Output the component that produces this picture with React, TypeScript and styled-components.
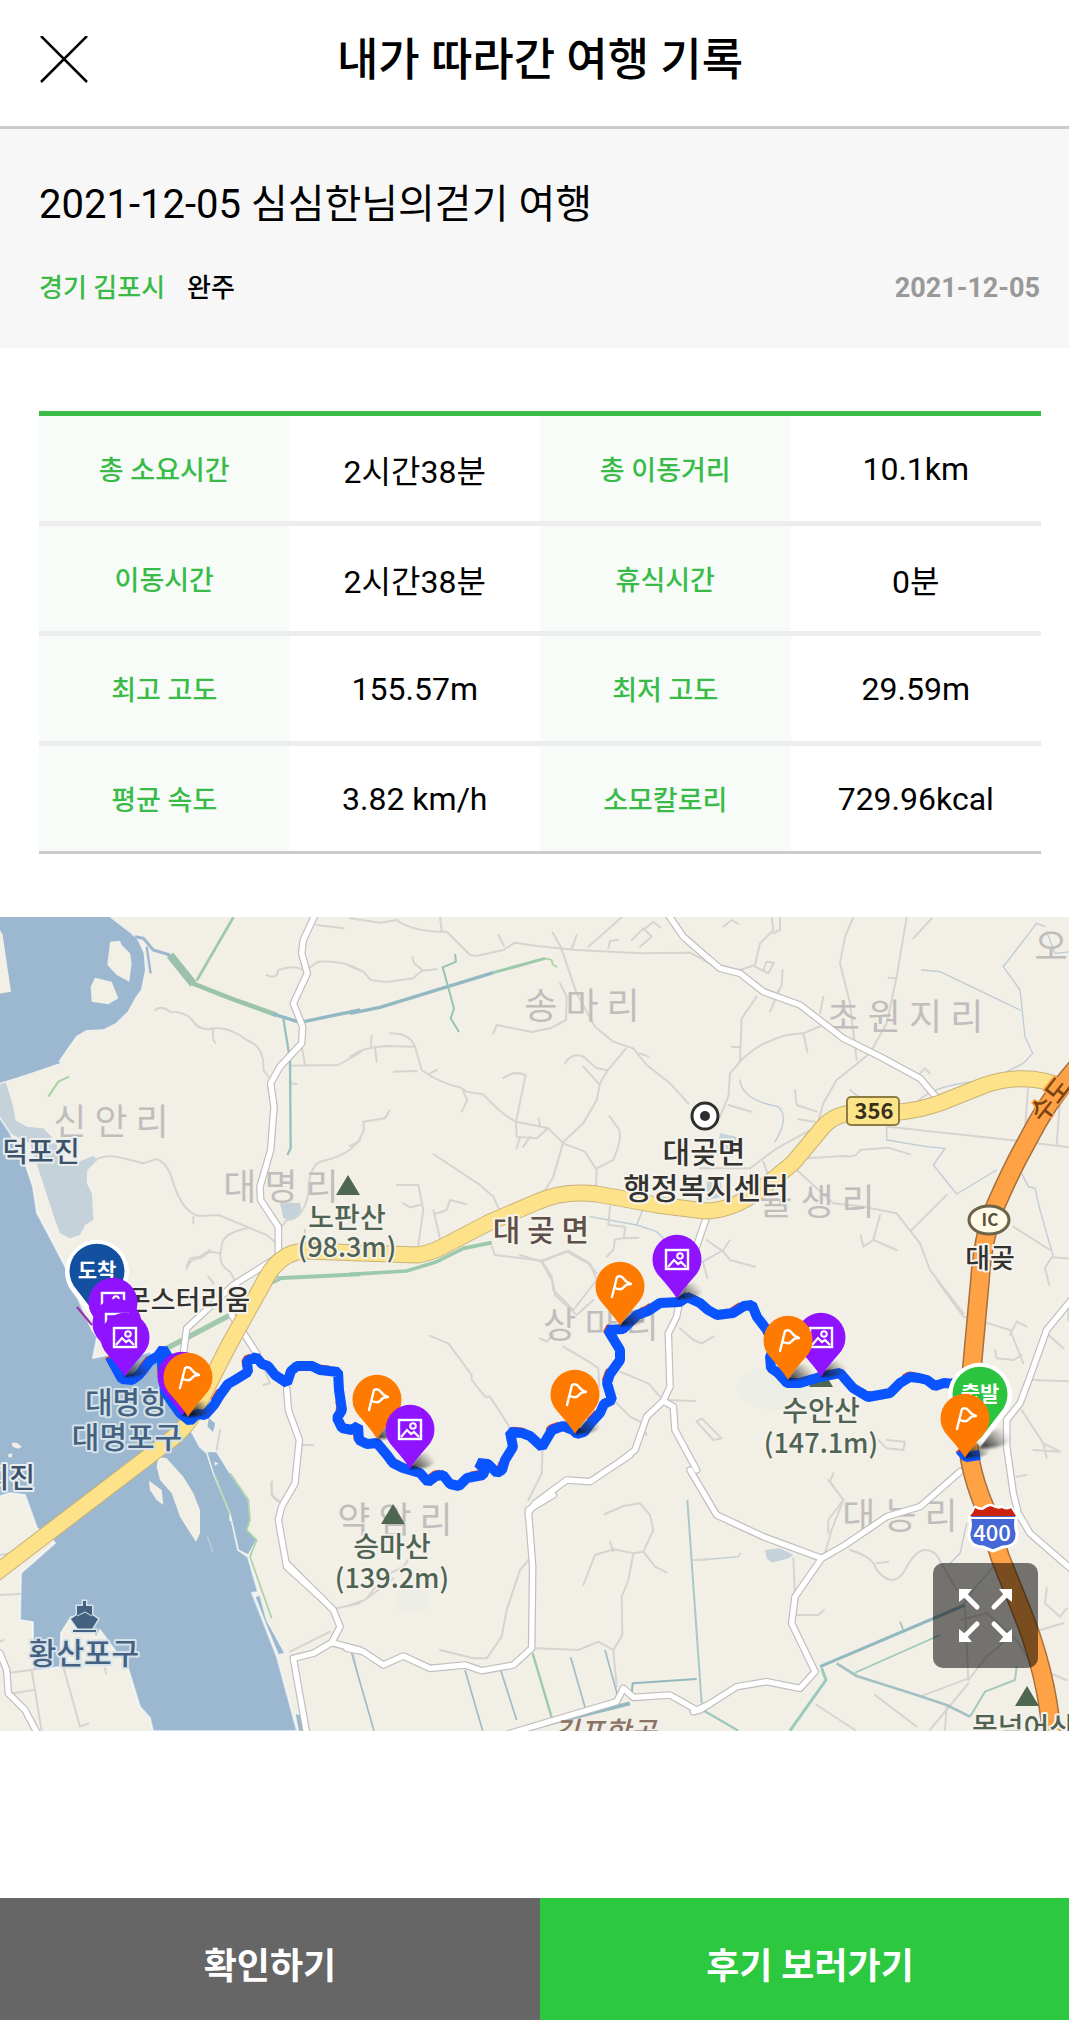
import React from "react";
import styled, { createGlobalStyle } from "styled-components";

const GlobalStyle = createGlobalStyle`
  *, *::before, *::after { box-sizing: border-box; }
  body {
    margin: 0;
    background: #fff;
    color: #000;
    font-family: Roboto, "Noto Sans CJK KR", sans-serif;
  }
  button { font: inherit; }
`;

/* ---------- layout ---------- */

const Screen = styled.div`
  overflow-x: clip;
`;

/* The page runs a little under the right edge of the window, as in the app's web view. */
const Page = styled.div`
  display: flex;
  flex-direction: column;
  width: calc(100% + 11px);
  min-height: 100vh;
`;

const Header = styled.header`
  display: grid;
  grid-template-columns: 48px 1fr 48px;
  align-items: center;
  padding: 30px 40px 36px;
  border-bottom: 3px solid #cbcbcb;
`;

const CloseButton = styled.button`
  display: block;
  width: 48px;
  height: 48px;
  padding: 0;
  border: 0;
  background: none;
  cursor: pointer;
  svg { display: block; }
`;

const Title = styled.h1`
  margin: 0;
  padding-top: 2px;
  font-size: 45px;
  font-weight: 500;
  line-height: 58px;
  text-align: center;
`;

const Summary = styled.section`
  padding: 47px 40px 42px 39px;
  background: #f7f7f7;
`;

const TripName = styled.h2`
  margin: 0 0 36px;
  font-size: 40px;
  font-weight: 400;
  line-height: 58px;
`;

const Meta = styled.div`
  display: flex;
  align-items: center;
  gap: 22px;
  font-size: 26px;
  font-weight: 500;
  line-height: 36px;
`;

const Region = styled.span`
  color: #3abb48;
`;

const TripDate = styled.time`
  margin-left: auto;
  color: #999;
  font-size: 27px;
  font-weight: 700;
`;

const Stats = styled.section`
  padding: 63px 39px;
`;

const StatsTable = styled.table`
  width: 100%;
  table-layout: fixed;
  border-collapse: separate;
  border-spacing: 0;
  border-top: 5px solid #3cbd4a;
  border-bottom: 3px solid #cbcbcb;
`;

const StatRow = styled.tr`
  &:not(:last-child) > * { border-bottom: 5px solid #ededed; }
`;

const StatLabel = styled.th`
  height: 110px;
  padding: 0;
  background: #f7fcf8;
  color: #3abb48;
  font-size: 27px;
  font-weight: 500;
  tr:last-child > & { height: 105px; }
`;

const StatValue = styled.td`
  padding: 0;
  font-size: 32px;
  text-align: center;
`;

const MapPanel = styled.section`
  position: relative;
  overflow: hidden;
  background: #f2efe7;
`;

const MapSvg = styled.svg`
  display: block;
  width: 100%;
  height: auto;
  font-family: "Noto Sans CJK KR", sans-serif;
`;

const ExpandButton = styled.button`
  position: absolute;
  right: 42px;
  bottom: 63px;
  display: grid;
  place-items: center;
  width: 105px;
  height: 105px;
  padding: 0;
  border: 0;
  border-radius: 10px;
  background: rgba(0, 0, 0, 0.52);
  cursor: pointer;
`;

const Footer = styled.footer`
  display: grid;
  grid-template-columns: 1fr 1fr;
  margin-top: auto;
`;

const FooterButton = styled.button<{ $primary?: boolean }>`
  height: 122px;
  padding: 8px 0 0;
  border: 0;
  background: ${(p) => (p.$primary ? "#2cc840" : "#666")};
  color: #fff;
  font-size: 36px;
  font-weight: 700;
  cursor: pointer;
`;

/* ---------- map data ---------- */

/* Survey sheets: each sheet has its own origin and three units to the map unit. */
const sheets = {
  A: [0, 910], B: [350, 910], C: [700, 910], D: [0, 1220], E: [270, 1300],
  F: [520, 1200], G: [740, 1280], H: [0, 1440], I: [350, 1500], J: [700, 1480],
} as const;
type Sheet = keyof typeof sheets;
type Lines = [Sheet, string][];

const at = (s: Sheet) => `translate(${sheets[s][0]} ${sheets[s][1]}) scale(${1 / 3})`;

const sea =
  "M-9,1108 L0,1118 L10,1133 L25,1163 L33,1187 L37,1213 L53,1243 L67,1270 L80,1303 L92,1330 L97,1337 L93,1358 L108,1355 L112,1362 L150,1352 L165,1365 L165,1390 L187,1423 L200,1447 L207,1453 L214,1474 L230,1513 L238,1550 L248,1557 L258,1592 L252,1593 L277,1657 L297,1731 L153,1731 L150,1718 L140,1707 L128,1668 L100,1630 L96,1638 L90,1625 L71,1617 L61,1633 L60,1667 L33,1670 L33,1622 L20,1620 L21,1573 L55,1543 L52,1539 L37,1528 L25,1495 L10,1493 L-9,1499 Z";

const water: Lines = [
  ["A", "M-20,12 L320,12 L395,70 L415,90 L433,130 L437,180 L425,240 L410,260 L385,305 L350,340 L310,360 L260,362 L230,380 L205,415 L178,455 L190,458 L120,482 L50,505 L-20,526 Z"],
  ["H", "M620,35 L650,35 L690,100 L745,180 L750,240 L740,270 L770,300 L745,345 L715,330 L690,220 L640,100 Z"],
  ["H", "M765,470 L780,465 L800,540 L855,640 L835,645 L800,560 Z"],
  ["H", "M885,820 L910,825 L915,874 L895,874 Z"],
  ["D", "M625,590 L648,610 L640,640 L620,620 Z"],
];

const shallows: Lines = [
  ["A", "M-20,522 L18,518 L40,590 L46,630 L80,650 L130,655 L155,680 L150,700 L90,700 L30,670 L-20,590 Z"],
  ["A", "M90,700 L170,700 L180,765 L205,768 L280,738 L292,750 L262,780 L260,820 L276,850 L280,930 L255,945 L240,975 L210,985 L180,970 L165,930 Z"],
  ["A", "M840,880 L900,878 L905,905 L880,930 L850,925 Z"],
  ["J", "M195,210 L240,205 L280,225 L265,235 L215,248 L200,235 Z"],
  ["C", "M60,670 L110,680 L100,740 L50,735 Z M20,810 L60,800 L70,860 L20,870 Z"],
];

const islands: Lines = [
  ["A", "M330,95 L360,92 L365,105 L390,130 L395,160 L388,215 L350,195 L322,165 Z"],
  ["A", "M285,203 L335,215 L355,265 L325,283 L275,275 L272,230 Z"],
  ["A", "M-9,50 L0,60 L8,75 L33,245 L-9,252 Z"],
  ["H", "M475,50 L500,55 L550,110 L580,160 L600,210 L600,280 L588,305 L565,270 L540,230 L515,160 L480,120 L470,80 Z"],
  ["H", "M447,122 L485,150 L490,195 L470,180 L450,150 Z"],
  ["D", "M35,668 L50,668 L66,680 L55,686 L38,680 Z"],
  ["D", "M25,702 L36,700 L36,712 L25,712 Z"],
  ["H", "M643,65 L655,70 L645,78 Z M688,220 L696,240 L688,245 Z"],
];

const lanes: Lines = [
  ["A", "M465,300 Q485,285 510,305 Q560,305 580,335 Q600,365 645,355 Q690,350 740,390 Q795,410 790,480 L805,500 M640,360 Q635,385 645,398"],
  ["A", "M800,195 Q830,210 835,180 Q880,165 905,178 M925,175 L955,155 Q1030,150 1080,180 M950,45 L1030,55 M905,410 L915,465 M875,467 L1015,465 L1080,428 M872,520 L890,522"],
  ["A", "M285,750 Q320,730 370,745 L430,760 L470,747 Q505,760 520,820 Q550,910 600,918 L655,915 L740,950 L800,975 L830,1000 M580,920 L580,940"],
  ["A", "M740,955 Q665,970 665,1010 Q650,1065 690,1085 L710,1120 M560,1075 Q570,1045 600,1045 L630,1025 L660,1030 M625,1100 L640,1120"],
  ["A", "M1080,690 L1060,710 Q1030,740 960,755 Q925,775 925,850 Q910,930 860,930 L845,950 M915,960 L912,985"],
  ["B", "M0,25 L90,38 L140,30 Q180,60 260,65 L290,65 L360,135 L380,138 L460,120 L495,98 L560,108 L680,120 L870,130 L1020,128 L1080,160 M270,22 L275,60 M445,75 L462,108 M680,75 L665,118"],
  ["B", "M0,168 L40,185 L62,210 L110,216 L190,205 L215,182 L260,178 M187,142 L192,160 L220,182 M715,110 L815,22 M775,115 L780,92 L805,90 M845,90 L880,55 L905,80 L870,110 M880,60 L910,35 L930,52"],
  ["B", "M608,68 L632,110 L680,250 L735,350 L790,395 L850,415 L890,465 L960,520 L1015,580 M630,220 L650,260 L648,330 L600,355 L545,366 L440,345 L430,370"],
  ["B", "M828,415 L770,485 L750,520 L740,570 L700,640 L640,695 L610,800 L580,850 M645,460 Q665,425 700,440 L740,475 L770,480 M700,470 L745,520 M870,430 L895,440"],
  ["B", "M0,440 Q40,410 110,408 L195,410 L215,480 Q270,520 330,532 L350,545 L400,553 Q460,620 500,635 L595,655 L640,700 L705,725 L740,780 L738,825 M195,410 Q180,370 120,370 M65,378 L62,410 M75,410 L80,455 M132,485 L200,483 M340,545 L352,570 L335,605 M240,490 L260,480"],
  ["B", "M460,505 Q490,480 527,495 L498,635 L500,680 L560,685 L595,655 M510,680 L500,715 M540,680 L520,710 M565,625 L570,645 M740,775 L790,750 Q820,680 805,655 L778,618"],
  ["B", "M0,708 L25,695 L42,660 L40,635 L105,625 L118,602 M250,732 L390,825 L430,860 L450,905 M140,825 L205,825 L220,900 L205,1005 M160,880 L180,892 L210,885 M250,900 L270,985 M255,912 L290,900 L300,870 L350,883"],
  ["B", "M425,1010 L435,1035 L575,1052 L655,1022 L720,1060 L740,1110 L670,1200 L610,1140 L605,1100 L575,1052 M780,890 L775,945 L825,950 L822,985 L865,983 M822,985 L795,988 L790,1020 L770,1040"],
  ["C", "M460,22 L435,80 L420,160 L450,280 L470,450 M620,22 L590,200 L560,340 L510,430 L410,510 L370,580 L350,650 M640,85 L695,25 M565,203 L590,205"],
  ["C", "M215,22 L220,60 L180,100 L165,165 L120,180 M240,22 L240,60 L220,70 M70,50 L95,30 L115,42 M165,170 L205,190 L222,158 L200,155 L190,180 M248,180 L245,225 L210,305 M235,240 L230,260"],
  ["C", "M170,260 L125,325 L120,455 L90,490 L85,560 L60,620 M120,455 Q170,400 260,375 L310,370 L370,345 M310,370 L322,425 M370,260 L360,310 M95,410 L120,412"],
  ["C", "M285,540 L290,585 L350,605 M85,585 L155,605 M350,650 L230,715 L150,775 L0,775 M295,628 L345,635 M190,755 L205,800 M320,745 L430,738 Q470,745 480,720 L565,713 L630,733"],
  ["C", "M565,650 L930,690 L1140,716 M985,520 L975,660 M1080,570 L1070,705 M740,855 L635,960 M290,780 L400,880 L490,890 L590,910 L660,1000 L690,1080 L790,1210 M540,915 L520,990 L490,1010 L482,975 M520,990 L590,1020 M940,950 L1050,1020 M1140,1048 L1055,1042 L1035,1075 L1048,1125"],
  ["C", "M20,990 L70,1025 L90,1050 L165,1070 M10,1060 L22,1105 M450,540 L500,580 M660,490 L675,475 L690,490"],
  ["F", "M0,165 L65,185 L140,155 L205,190 L230,220 M65,185 L100,250 L105,285 L170,345 L220,300 M60,415 L80,425 L100,405 M130,440 L215,490 L235,505 L238,560 M300,515 L385,550 L420,590 M440,600 L525,603 M270,590 L330,650 L360,665 L380,705 M480,385 L520,420 L545,430 L580,410 M530,665 L580,720 L605,715 L545,655 Z"],
  ["E", "M478,107 L535,130 L605,225 L605,240 L645,290 L660,290 L715,375 L720,390 M818,450 L815,520 L775,600 M5,545 Q0,600 30,605 M95,435 L130,435 M290,895 L340,830 L400,800 L415,780"],
  ["D", "M560,140 L570,115 L600,110 L630,90 M775,405 L810,490 L790,495 M660,630 L650,690"],
  ["G", "M590,0 L670,110 L745,130 L810,150 L850,250 M810,165 L830,125 L860,140 M770,235 L820,240 L845,225 M765,210 L770,235 M985,60 L985,120 M915,155 L970,205 M875,300 L1020,305 M845,390 L910,490 L960,515 L880,510 M910,490 L920,535 M830,590 L860,585 M415,480 L440,505 L490,510 L495,485 L440,480 M280,580 L270,605 L310,660 L265,720 L265,760"],
  ["H", "M815,125 L815,165 L840,185 M870,635 L990,575 M1010,505 L1080,490 M0,465 L60,462 M20,700 L130,685 M95,690 L125,874 M190,680 L240,860 L265,850 M40,760 L100,750 M0,345 L30,340 M0,605 L10,600 M315,685 L318,700"],
  ["I", "M765,42 L820,18 L870,10 L900,45 L910,90 L880,155 L850,160 L790,148 L735,165 L700,255 M880,155 L915,200 L950,217 M850,160 L835,240 L815,290 L817,405 L790,450 L745,425 L685,450 L560,445 M790,450 L800,560 M535,180 L510,210 L470,330 L455,410 L410,475 L370,475 L270,450 M0,315 L45,300 L130,235 M1030,180 L1080,178 M780,125 L790,155"],
  ["J", "M385,0 L430,60 L395,150 L375,220 M280,235 L285,350 M290,405 L355,405 L372,390 M450,210 Q520,230 530,270 Q580,330 615,270 Q660,180 710,225 L770,330 M805,600 L795,380 M805,600 L860,530 L930,470 M350,675 L465,750 M525,645 L650,740 M660,650 L805,595 M740,680 L735,750 M805,610 L690,750 M1040,325 L1035,370 L1080,410 L1100,385 M1020,450 L1090,430 M530,250 L565,245 M780,420 L860,400 L950,480 L1000,560 L1100,600"],
];

const streams: Lines = [
  ["B", "M720,920 L860,945 L920,965 L955,1000 M880,895 L860,945"],
  ["C", "M1035,50 L1010,40 L910,170 L960,240 L975,380 L998,430 L970,460 L910,490 M665,180 L720,185 L960,300 M120,510 Q125,570 235,590 Q270,625 225,695 M640,590 Q680,530 820,515 M560,650 L560,690 L680,710 L735,715 L700,765 L770,852 L890,780 M960,780 L985,830 L1005,835 L1020,900 L1060,1040 M0,1060 L70,1020 L90,990 M1040,65 L1065,130 L1140,122"],
  ["H", "M623,290 L638,335 M1060,645 L1080,730"],
  ["J", "M880,260 L820,330 L790,375 M0,240 L115,230 L122,220 M800,130 L780,220 L750,250"],
];

const canals: [Sheet, string, number, string][] = [
  ["A", "M405,80 L430,85 L460,120 L510,135", 9, "#9bb8d0"],
  ["A", "M440,110 L452,190", 7, "#9bb8d0"],
  ["A", "M510,135 L580,222", 24, "#9cc0ae"],
  ["A", "M572,218 L700,268 L830,315", 14, "#9cc4a8"],
  ["A", "M820,312 L900,337 L1080,300", 10, "#92b8c4"],
  ["A", "M590,212 L700,22", 8, "#9cc9a8"],
  ["A", "M850,325 L870,450 L872,715 L862,735", 7, "#98c0c0"],
  ["A", "M145,560 L175,515 L207,500", 6, "#a6d3a2"],
  ["B", "M0,310 L90,292 L430,188", 10, "#92b8c4"],
  ["B", "M430,188 L585,145", 9, "#9cc9a8"],
  ["B", "M585,145 L605,150 L608,163 L622,172", 5, "#a6d3a2"],
  ["B", "M315,132 L318,155 L278,172 L312,295 L302,325 L327,366", 6, "#98c4b4"],
  ["A", "M830,1105 L1080,1093", 12, "#9cc9ac"],
  ["B", "M0,1093 L170,1083 L260,1055 L340,1015 L425,998", 11, "#9cc9ac"],
  ["D", "M500,385 L700,280", 16, "#a3c9ac"],
  ["D", "M800,195 L840,178", 10, "#a3c9ac"],
  ["H", "M645,105 L690,225", 5, "#b4d8b0"],
  ["H", "M690,100 L745,180 L750,240 L740,270 L770,300 L750,350 L815,535", 5, "#a8d4a4"],
  ["I", "M5,460 L72,692 M345,510 L398,692 M452,510 L500,660 M662,472 L705,622 M765,450 L805,595", 5, "#a0bcc6"],
  ["I", "M548,460 L605,652", 7, "#9ccaae"],
  ["I", "M845,580 L848,550 L1040,537", 6, "#92b8c0"],
  ["I", "M1012,0 L1055,610", 6, "#a9c8c8"],
  ["I", "M500,695 L840,610", 12, "#92b8c0"],
  ["J", "M8,690 L115,752", 7, "#9ccaba"],
  ["J", "M360,560 L795,375", 9, "#92b8c0"],
  ["J", "M365,565 L378,600 L270,752", 9, "#9ccabc"],
  ["J", "M410,550 L470,588 L650,645 L740,675 L810,710", 8, "#a3c0c4"],
  ["J", "M465,578 L720,465 M600,425 L610,450", 5, "#9cc9b4"],
  ["J", "M810,710 L855,635 L945,600 L950,560", 6, "#a3c9bc"],
];

const whiteRoads: Lines = [
  ["A", "M945,15 L910,90 L905,130 L922,190 L880,280 L908,350 L905,400 L840,470 L812,520 L822,590 L812,720 L780,830 L782,870 L835,950 L835,1040 L700,1125 L560,1255 L550,1330"],
  ["D", "M695,285 L770,400"],
  ["E", "M50,265 L55,330 L88,420 L75,550 L35,620 L25,660 L50,800 L160,900"],
  ["H", "M860,370 L940,450 L1000,510 L1020,560 L995,608 L940,640 L880,655 L920,880 M995,608 L1080,630"],
  ["I", "M-10,445 L40,455 L100,495 L160,468 L240,505 L345,495 L395,512 L490,495 L545,445 L548,200 L535,30 L610,-15"],
  ["E", "M775,650 L775,640 L795,610 L890,540 L960,545 L1080,465"],
  ["F", "M300,785 L345,750 L380,650 L430,603 L460,620 L465,690 L530,810 M430,603 L450,560 L445,400 L470,350 L485,270 L560,50"],
  ["J", "M-30,-30 L50,105 L190,170 L365,235 L435,195 L560,110 L660,80 L780,-25 M365,235 L285,350 L275,430 L345,575 L300,625 L200,605 L110,620 L0,690 L-20,695"],
  ["I", "M1080,612 L1040,630 L960,585 L850,592 L820,565 L800,605 L480,700"],
  ["B", "M955,15 L1000,80 L1080,150"],
  ["C", "M25,145 L60,175 L120,190 L190,245 L300,285 L430,385 L540,440 L660,505 L720,575"],
  ["G", "M1010,40 L920,150 L870,290 L840,370 L800,420 L800,500 L820,640 L835,700 L870,760 L1020,890"],
  ["H", "M0,640 L20,690 L25,760 L75,810 L112,880"],
];

const yellowRoad =
  "M-12,1579 L165,1444 Q188,1428 197,1407 L230,1343 L263,1284 Q278,1252 305,1251 L417,1255 Q430,1253 440,1248 L490,1222 L537,1202 Q563,1190 597,1194 L657,1205 L705,1211 Q732,1211 760,1190 L793,1163 L823,1127 Q835,1113 860,1112 L900,1112 Q920,1110 940,1103 L985,1085 Q1027,1071 1066,1088";

const orangeRoad =
  "M1090,1052 L1069,1077 Q1050,1100 1037,1123 L1017,1160 Q1002,1190 993,1212 Q982,1243 980,1280 L972,1367 Q966,1425 970,1460 Q975,1485 985,1508 L1000,1557 L1020,1607 Q1048,1675 1052,1740";

const route =
  "M110,1357 L118,1372 L122,1379 L132,1380 L139,1375 L150,1361 L158,1356 L163,1349 L168,1357 L162,1362 L163,1375 L165,1392 L172,1402 L180,1413 L190,1421 L197,1414 L205,1415 L214,1405 L220,1395 L228,1384 L235,1380 L248,1372 L247,1361 L256,1357 L262,1364 L268,1366 L275,1375 L287,1383 L291,1371 L297,1366 L312,1366 L320,1370 L338,1372 L339,1390 L342,1410 L337,1418 L342,1428 L352,1430 L358,1426 L359,1440 L367,1444 L377,1443 L387,1455 L393,1463 L403,1468 L420,1473 L428,1482 L436,1476 L443,1475 L450,1484 L459,1486 L467,1478 L483,1475 L485,1470 L478,1463 L488,1464 L497,1473 L502,1470 L505,1460 L513,1447 L510,1432 L522,1433 L530,1436 L542,1447 L552,1430 L563,1426 L573,1430 L577,1434 L584,1432 L590,1424 L600,1413 L604,1404 L612,1400 L607,1383 L610,1374 L620,1360 L620,1350 L608,1330 L623,1329 L637,1315 L648,1311 L660,1303 L680,1302 L687,1297 L700,1303 L708,1310 L717,1315 L733,1313 L744,1306 L752,1305 L757,1317 L767,1330 L776,1350 L770,1356 L771,1368 L778,1373 L787,1383 L800,1383 L820,1377 L840,1373 L853,1388 L868,1397 L890,1393 L900,1383 L910,1377 L919,1378 L927,1380 L935,1386 L944,1383 L955,1384 M960,1450 L966,1457 L980,1455";

const villages: [number, number, string][] = [
  [111, 1122, "신 안 리"], [281, 1187, "대 명 리"], [582, 1006, "송 마 리"],
  [905, 1017, "초 원 지 리"], [817, 1202, "율 생 리"], [1051, 947, "오"],
  [601, 1325, "상 마 리"], [395, 1520, "약 암 리"], [900, 1516, "대 능 리"],
];

type Tone = "navy" | "port" | "ink" | "peak" | "town";
const tones: Record<Tone, [string, string]> = {
  navy: ["#3d5268", "#e9eef0"],
  port: ["#44617f", "#d5e2ea"],
  ink: ["#33322f", "#f6f4ee"],
  peak: ["#4f6354", "#f4f2ea"],
  town: ["#5e4f49", "#f6f3ea"],
};

const places: [number, number, number, Tone, string, ("start" | "middle" | "end")?][] = [
  [41, 1152, 28, "navy", "덕포진"],
  [250, 1300, 27, "ink", "몬스터리움", "end"],
  [347, 1218, 28, "peak", "노판산"],
  [347, 1247, 27, "peak", "(98.3m)"],
  [541, 1230, 30, "town", "대 곶 면"],
  [704, 1152, 30, "ink", "대곶면"],
  [706, 1188, 30, "ink", "행정복지센터"],
  [990, 1258, 27, "ink", "대곶"],
  [85, 1402, 30, "port", "대명항", "start"],
  [127, 1437, 30, "port", "대명포구"],
  [35, 1478, 28, "navy", "지진", "end"],
  [84, 1653, 30, "port", "황산포구"],
  [392, 1547, 28, "peak", "승마산"],
  [392, 1578, 27, "peak", "(139.2m)"],
  [821, 1411, 28, "peak", "수안산"],
  [821, 1443, 27, "peak", "(147.1m)"],
  [972, 1728, 28, "peak", "목넘어산", "start"],
];

const peaks: [number, number][] = [[348, 1175], [393, 1504], [821, 1367], [1027, 1686]];

type PinKind = "photo" | "flag";
const pins: [PinKind, number, number][] = [
  ["photo", 113, 1341], ["photo", 117, 1362], ["photo", 125, 1376],
  ["photo", 182, 1415], ["flag", 188, 1416],
  ["flag", 377, 1438], ["photo", 410, 1468], ["flag", 575, 1433],
  ["flag", 620, 1325], ["photo", 677, 1298],
  ["photo", 821, 1376], ["flag", 788, 1379],
];

/* ---------- map parts ---------- */

function Strokes({ lines, color, width }: { lines: Lines; color: string; width: number }) {
  return (
    <g fill="none" stroke={color} strokeWidth={width} strokeLinejoin="round" strokeLinecap="round">
      {lines.map(([s, d], i) => <path key={i} d={d} transform={at(s)} />)}
    </g>
  );
}

function Areas({ areas, color, edge }: { areas: Lines; color: string; edge?: string }) {
  return (
    <g fill={color} stroke={edge ?? "none"} strokeWidth={4} strokeLinejoin="round">
      {areas.map(([s, d], i) => <path key={i} d={d} transform={at(s)} />)}
    </g>
  );
}

function PinShadow({ x, y, scale = 1 }: { x: number; y: number; scale?: number }) {
  return (
    <path
      d="M-1,1 L9,-13 Q24,-20 25,-8 Q24,1 0,1 Z"
      fill="url(#pinShadow)"
      filter="url(#soften)"
      transform={`translate(${x} ${y}) scale(${scale})`}
    />
  );
}

function Pin({ kind, x, y }: { kind: PinKind; x: number; y: number }) {
  return (
    <g>
      <PinShadow x={x} y={y} />
      <g transform={`translate(${x} ${y})`} fill="none" stroke="#fff">
        <path
          d="M0,1 Q-3,-5 -17,-21 A24.5,24.5 0 1 1 17,-21 Q3,-5 0,1 Z"
          fill={kind === "flag" ? "#ff7a00" : "#8f13ff"}
          stroke="none"
        />
        {kind === "flag" ? (
          <path
            d="M-8,-28 L-3,-48 Q1,-50 4,-46 Q7,-42 11,-41 Q6,-41 4,-38 Q1,-34 -5,-37"
            strokeWidth={2.4}
            strokeLinecap="round"
            strokeLinejoin="round"
          />
        ) : (
          <>
            <rect x={-11} y={-48} width={22} height={19} strokeWidth={2.4} />
            <circle cx={3} cy={-42} r={2.8} strokeWidth={2} />
            <path d="M-9,-31 L-3,-38 L1,-34 L4,-36 L9,-31" strokeWidth={2.2} />
          </>
        )}
      </g>
    </g>
  );
}

function EndPin({ x, y, color, label }: { x: number; y: number; color: string; label: string }) {
  return (
    <g>
      <PinShadow x={x} y={y} scale={1.2} />
      <g transform={`translate(${x} ${y})`}>
        <path d="M0,0 L-24,-31 A32,32 0 1 1 24,-31 Z" fill="#fff" />
        <path d="M0,-8 L-20,-34 A27.5,27.5 0 1 1 20,-34 Z" fill={color} />
        <text y={-46} fontSize={21} fontWeight={700} fill="#fff" textAnchor="middle">{label}</text>
      </g>
    </g>
  );
}

function TrailMap() {
  return (
    <MapSvg viewBox="0 917 1080 814" role="img" aria-label="여행 경로 지도">
      <defs>
        <linearGradient id="pinShadow" x1="0" y1="1" x2="1" y2="0.4">
          <stop offset="0" stopColor="#000" stopOpacity="0.9" />
          <stop offset="0.45" stopColor="#222" stopOpacity="0.55" />
          <stop offset="1" stopColor="#444" stopOpacity="0" />
        </linearGradient>
        <filter id="soften" x="-30%" y="-30%" width="160%" height="160%">
          <feGaussianBlur stdDeviation="1.2" />
        </filter>
      </defs>

      <rect y={917} width={1080} height={814} fill="#f2efe7" />
      <g fill="#ecede5">
        <ellipse cx={775} cy={1388} rx={38} ry={22} />
        <ellipse cx={412} cy={1600} rx={18} ry={12} />
      </g>
      <Areas areas={shallows} color="#c5d2d9" />
      <path d={sea} fill="#9bb8d0" stroke="#fff" strokeOpacity={0.6} strokeWidth={2} />
      <Areas areas={water} color="#9bb8d0" edge="#eef1ee" />
      <Areas areas={islands} color="#f2efe7" />

      <Strokes lines={streams} color="#bfccd5" width={4} />
      <Strokes lines={lanes} color="#d6d4d0" width={6} />
      {canals.map(([s, d, w, c], i) => (
        <path key={i} d={d} transform={at(s)} fill="none" stroke={c} strokeWidth={w} strokeLinejoin="round" />
      ))}

      <g>
        {villages.map(([x, y, name]) => (
          <text key={name} x={x} y={y + 13} fontSize={36} fontWeight={400} fill="#bfbebc" textAnchor="middle">
            {name}
          </text>
        ))}
      </g>

      <Strokes lines={whiteRoads} color="#bfbdbd" width={23} />
      <Strokes lines={whiteRoads} color="#fff" width={16} />

      <g fill="none" strokeLinejoin="round">
        <path d={yellowRoad} stroke="#c8b277" strokeWidth={17} />
        <path d={yellowRoad} stroke="#fde28a" strokeWidth={15} />
        <path d={orangeRoad} stroke="#a8703c" strokeWidth={20} />
        <path d={orangeRoad} stroke="#ffa245" strokeWidth={17} />
      </g>

      {peaks.map(([x, y]) => (
        <path key={x} d={`M${x},${y} l12,20 h-24 Z`} fill="#4f6650" />
      ))}

      <g strokeLinejoin="round" fontWeight={500}>
        {places.map(([x, y, size, tone, name, anchor = "middle"]) => (
          <text
            key={name + y}
            x={x}
            y={y + Math.round(size * 0.37)}
            fontSize={size}
            fill={tones[tone][0]}
            stroke={tones[tone][1]}
            strokeWidth={4}
            paintOrder="stroke"
            textAnchor={anchor}
          >
            {name}
          </text>
        ))}
        <text x={553} y={1742} fontSize={28} fontStyle="italic" fill="#8b7265">김포항공</text>
        <text
          transform="translate(1043 1124) rotate(-52)"
          fontSize={26}
          fill="#7b4313"
          stroke="#ffa245"
          strokeWidth={3}
          paintOrder="stroke"
        >
          수도
        </text>
      </g>

      {/* town hall */}
      <circle cx={705} cy={1116} r={13} fill="#fff" stroke="#2e2e2e" strokeWidth={3} />
      <circle cx={705} cy={1116} r={5} fill="#2e2e2e" />

      {/* harbour */}
      <g fill="#44617f" stroke="#d5e2ea" strokeWidth={3} paintOrder="stroke">
        <path d="M83,1601 h3 v5 h6 v9 l6,4 l-6,10 h-14 l-7,-10 l6,-4 v-9 h6 Z" />
        <rect x={73} y={1630} width={23} height={2} />
      </g>
      <path d="M77,1616 L85,1612 L92,1616" fill="none" stroke="#d5e2ea" strokeWidth={1} />

      {/* road signs */}
      <rect x={847} y={1097} width={52} height={28} rx={4} fill="#fbe588" stroke="#8f7c45" strokeWidth={2} />
      <text x={874} y={1119} fontSize={22} fontWeight={700} fill="#3a2f1c" textAnchor="middle">356</text>
      <ellipse cx={989} cy={1220} rx={20} ry={14} fill="#fffbe6" stroke="#6c6449" strokeWidth={3} />
      <text x={990} y={1226} fontSize={17} fontWeight={700} fill="#5a523c" textAnchor="middle">IC</text>

      <g strokeLinejoin="round">
        <path
          d="M969,1517 Q974,1511 975,1507 Q982,1511 985,1507 Q990,1504 993,1506 Q998,1509 1002,1507 Q1007,1510 1011,1507 L1017,1516 Q1014,1524 1017,1533 Q1018,1546 1003,1547 L993,1551 L983,1547 Q968,1546 969,1533 Q972,1524 969,1517 Z"
          fill="#4568d6"
          stroke="#fff"
          strokeWidth={3}
        />
        <path
          d="M970,1516 Q974,1512 975,1508 Q982,1512 986,1508 Q990,1505 993,1507 Q998,1510 1002,1508 Q1007,1511 1011,1508 L1016,1516 Z"
          fill="#cc2211"
        />
        <path d="M970,1518 H1017" stroke="#fff" strokeWidth={2} />
      </g>
      <text x={992} y={1541} fontSize={22} fontWeight={500} fill="#fff" textAnchor="middle">400</text>

      {/* walked trail */}
      <g fill="none" strokeLinejoin="bevel">
        <path d={route} stroke="#e8431c" strokeWidth={9} strokeDasharray="12 38" transform="translate(-1 -1)" />
        <path d={route} stroke="#0a54ff" strokeWidth={10} />
      </g>

      <path d="M77,1307 L92,1325" stroke="#9a2fae" strokeWidth={2} />
      <EndPin x={97} y={1324} color="#1450a0" label="도착" />
      {pins.map(([kind, x, y], i) => <Pin key={i} kind={kind} x={x} y={y} />)}
      <EndPin x={980} y={1447} color="#2cc43e" label="출발" />
      <Pin kind="flag" x={965} y={1457} />
    </MapSvg>
  );
}

/* ---------- page ---------- */

const stats: [string, string][][] = [
  [["총 소요시간", "2시간38분"], ["총 이동거리", "10.1km"]],
  [["이동시간", "2시간38분"], ["휴식시간", "0분"]],
  [["최고 고도", "155.57m"], ["최저 고도", "29.59m"]],
  [["평균 속도", "3.82 km/h"], ["소모칼로리", "729.96kcal"]],
];

export default function App() {
  return (
    <Screen>
      <GlobalStyle />
      <Page>
        <Header>
          <CloseButton type="button" aria-label="닫기">
            <svg width="48" height="48" viewBox="0 0 48 48" stroke="#000" strokeWidth="2.5">
              <path d="M1,0 L47,46 M47,0 L1,46" />
            </svg>
          </CloseButton>
          <Title>내가 따라간 여행 기록</Title>
        </Header>

        <Summary>
          <TripName>2021-12-05 심심한님의걷기 여행</TripName>
          <Meta>
            <Region>경기 김포시</Region>
            <span>완주</span>
            <TripDate dateTime="2021-12-05">2021-12-05</TripDate>
          </Meta>
        </Summary>

        <Stats>
          <StatsTable>
            <tbody>
              {stats.map((row) => (
                <StatRow key={row[0][0]}>
                  {row.map(([label, value]) => (
                    <React.Fragment key={label}>
                      <StatLabel scope="row">{label}</StatLabel>
                      <StatValue>{value}</StatValue>
                    </React.Fragment>
                  ))}
                </StatRow>
              ))}
            </tbody>
          </StatsTable>
        </Stats>

        <MapPanel>
          <TrailMap />
          <ExpandButton type="button" aria-label="지도 크게 보기">
            <svg width="53" height="53" viewBox="0 0 53 53" fill="#fff" stroke="#fff" strokeWidth="5" strokeLinecap="round">
              <path d="M5,5 L18,18 M48,5 L35,18 M5,48 L18,35 M48,48 L35,35" />
              <path
                stroke="none"
                d="M0,0 H13 L9,5 L5,9 L0,13 Z M53,0 H40 L44,5 L48,9 L53,13 Z M0,53 H13 L9,48 L5,44 L0,40 Z M53,53 H40 L44,48 L48,44 L53,40 Z"
              />
            </svg>
          </ExpandButton>
        </MapPanel>

        <Footer>
          <FooterButton type="button">확인하기</FooterButton>
          <FooterButton type="button" $primary>후기 보러가기</FooterButton>
        </Footer>
      </Page>
    </Screen>
  );
}
